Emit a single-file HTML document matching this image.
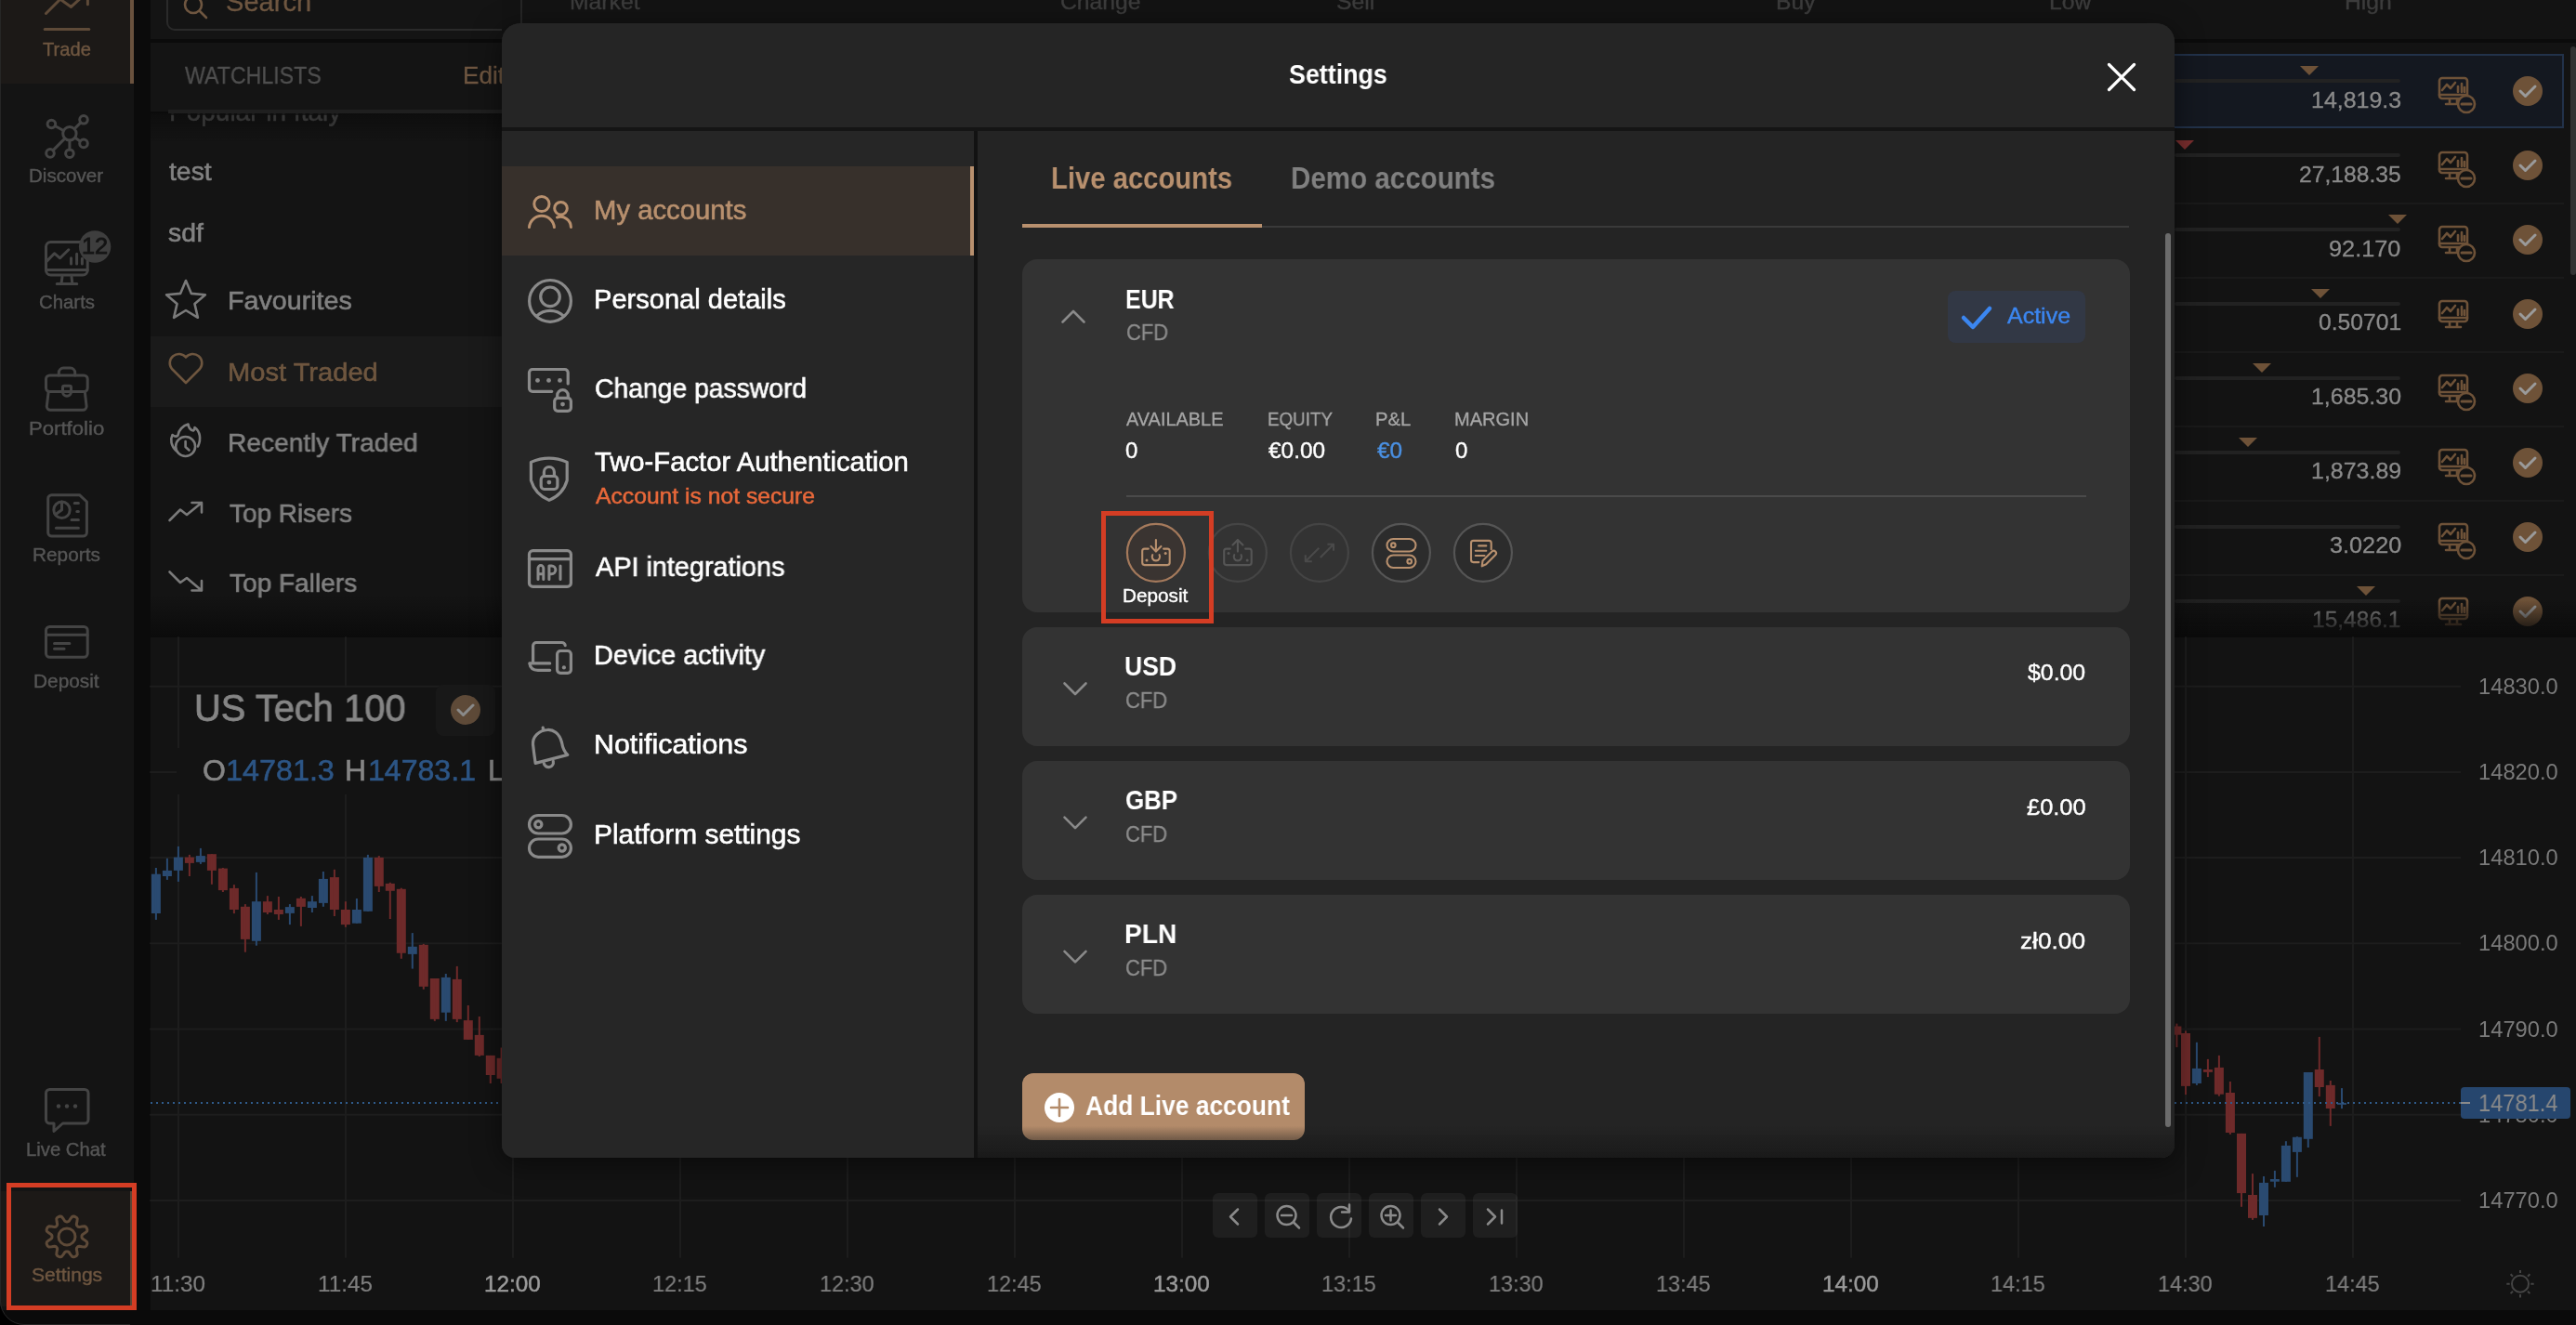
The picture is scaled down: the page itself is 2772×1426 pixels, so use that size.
<!DOCTYPE html><html><head><meta charset="utf-8"><style>
html,body{margin:0;padding:0;width:2772px;height:1426px;overflow:hidden;background:#0b0b0b}
.t{position:absolute;white-space:nowrap;line-height:1;font-family:"Liberation Sans",sans-serif;will-change:transform}
div{box-sizing:border-box}
</style></head><body>
<div style="position:absolute;left:0px;top:0px;width:2772px;height:1426px;background:#0b0b0b;border-radius:0px;"></div>
<div style="position:absolute;left:0px;top:0px;width:144px;height:1426px;background:#141414;border-radius:0px;"></div>
<div style="position:absolute;left:0px;top:0px;width:144px;height:90px;background:#1c1917;border-radius:0px;"></div>
<div style="position:absolute;left:140px;top:0px;width:4px;height:90px;background:#6a523e;border-radius:0px;"></div>
<div style="position:absolute;left:0px;top:1282px;width:144px;height:124px;background:#1c1917;border-radius:0px;"></div>
<div style="position:absolute;left:140px;top:1282px;width:4px;height:124px;background:#5a4636;border-radius:0px;"></div>
<div class="t" style="left:46.2px;top:44.1px;font-size:19.62px;letter-spacing:0px;color:#6e5640;font-weight:400;-webkit-text-stroke:0.4px #6e5640;transform:scaleX(1.0284);transform-origin:0 0;">Trade</div>
<div class="t" style="left:31.3px;top:180.4px;font-size:19.62px;letter-spacing:0px;color:#555555;font-weight:400;-webkit-text-stroke:0.4px #555555;transform:scaleX(1.0488);transform-origin:0 0;">Discover</div>
<div class="t" style="left:41.8px;top:316.4px;font-size:19.62px;letter-spacing:0px;color:#555555;font-weight:400;-webkit-text-stroke:0.4px #555555;transform:scaleX(1.0389);transform-origin:0 0;">Charts</div>
<div class="t" style="left:30.9px;top:452.4px;font-size:19.62px;letter-spacing:0px;color:#555555;font-weight:400;-webkit-text-stroke:0.4px #555555;transform:scaleX(1.1292);transform-origin:0 0;">Portfolio</div>
<div class="t" style="left:35.1px;top:588.4px;font-size:19.62px;letter-spacing:0px;color:#555555;font-weight:400;-webkit-text-stroke:0.4px #555555;transform:scaleX(1.0606);transform-origin:0 0;">Reports</div>
<div class="t" style="left:35.9px;top:724.4px;font-size:19.62px;letter-spacing:0px;color:#555555;font-weight:400;-webkit-text-stroke:0.4px #555555;transform:scaleX(1.0624);transform-origin:0 0;">Deposit</div>
<div class="t" style="left:28.4px;top:1228.4px;font-size:19.62px;letter-spacing:0px;color:#555555;font-weight:400;-webkit-text-stroke:0.4px #555555;transform:scaleX(1.0340);transform-origin:0 0;">Live Chat</div>
<div class="t" style="left:33.8px;top:1363.4px;font-size:19.62px;letter-spacing:0px;color:#6e5640;font-weight:400;-webkit-text-stroke:0.4px #6e5640;transform:scaleX(1.0748);transform-origin:0 0;">Settings</div>
<div style="position:absolute;left:0px;top:0px;width:1px;height:1426px;background:#262626;border-radius:0px;"></div>
<svg style="position:absolute;left:0;top:0;" width="2772" height="1426" viewBox="0 0 2772 1426" fill="none" stroke-linecap="round" stroke-linejoin="round"><g stroke="#5e4a38" stroke-width="3"><path d="M49.5 14.5 L64 0 M66 0 L76.5 7.4 L86.8 -2 M94.4 -2 V4.8"/><path d="M48.2 31.4 H95.8"/></g><g stroke="#444" stroke-width="3"><circle cx="74.9" cy="143.8" r="7.2"/><circle cx="55.4" cy="133.5" r="4.3"/><circle cx="90" cy="128.8" r="4.3"/><circle cx="90" cy="154.4" r="4.3"/><circle cx="54" cy="164.9" r="4.3"/><circle cx="74.9" cy="165.2" r="4.3"/><path d="M59.2 135.5 L68.3 140.5 M86.9 131.9 L80.2 138.6 M86.3 152 L80.8 148.3 M57 161.9 L69.7 149.1 M74.9 151 V160.9"/></g><g stroke="#444" stroke-width="3"><path d="M54.5 260.6 H94.2 V291 a5 5 0 0 1 -5 5 H54.5 a5 5 0 0 1 -5 -5 V265.6 a5 5 0 0 1 5 -5 Z"/><path d="M49.5 290.4 H94.2 M67 297.8 L66 305.2 M77 297.8 L77.8 305.2 M61.2 305.5 H82.8"/><path d="M50.6 280.9 L58.5 272.7 L64.6 277.8 L73.8 268.8 M76.5 277.8 V284.1 M82.6 273.3 V284.1 M88.4 278.3 V284.1"/></g><circle cx="102.1" cy="265.5" r="17.2" fill="#3e3e3e"/><g stroke="#444" stroke-width="3"><path d="M53.5 404 H90.2 a4 4 0 0 1 4 4 V417.5 a4 4 0 0 1 -4 4 H53.5 a4 4 0 0 1 -4 -4 V408 a4 4 0 0 1 4 -4 Z"/><path d="M52.2 421.5 L50.3 437.3 a4 4 0 0 0 4 4 H89.1 a4 4 0 0 0 4 -4 L91.3 421.5"/><path d="M63.3 404 V401 a5 5 0 0 1 5 -5 H75.7 a5 5 0 0 1 5 5 V404"/><path d="M67.5 416.7 a1.5 1.5 0 0 1 1.5 -1.5 H75 a1.5 1.5 0 0 1 1.5 1.5 V421.7 a4.5 4.5 0 0 1 -9 0 Z"/></g><g stroke="#444" stroke-width="3"><path d="M55.7 532.7 H85.5 L93.4 540 V573 a4 4 0 0 1 -4 4 H55.7 a4 4 0 0 1 -4 -4 V536.7 a4 4 0 0 1 4 -4 Z"/><circle cx="66.5" cy="548.8" r="8.7"/><path d="M66.5 540.1 V548.8 L59.6 553.8 M80.2 541.4 H84.4 M82.8 550.5 H84.4 M77 559.4 H84.4 M60.4 568.3 H84.4"/></g><g stroke="#444" stroke-width="3"><rect x="49.5" y="674.4" width="44.7" height="32.9" rx="4"/><path d="M49.5 683.3 H94.2 M58.5 692.5 H74.9 M58.5 698.3 H69.1"/></g><g stroke="#444" stroke-width="3"><path d="M53.5 1172.5 H91 a4 4 0 0 1 4 4 V1205 a4 4 0 0 1 -4 4 H67.5 L58 1217.5 V1209 H53.5 a4 4 0 0 1 -4 -4 V1176.5 a4 4 0 0 1 4 -4 Z"/></g><g fill="#444"><circle cx="63" cy="1190.5" r="2.2"/><circle cx="72" cy="1190.5" r="2.2"/><circle cx="81" cy="1190.5" r="2.2"/></g><g stroke="#5e4a38" stroke-width="3"><path d="M93.4 1339.8 L92.7 1341.1 L91.3 1342.1 L88.3 1341.8 L85.4 1341.2 L84.1 1341.5 L83.3 1342.2 L82.6 1343.0 L82.3 1344.3 L82.9 1347.2 L83.2 1350.2 L82.2 1351.6 L80.9 1352.3 L79.4 1352.8 L77.8 1352.5 L75.8 1350.1 L74.2 1347.6 L73.1 1347.0 L72.0 1346.9 L70.9 1347.0 L69.8 1347.6 L68.2 1350.1 L66.2 1352.5 L64.6 1352.8 L63.1 1352.3 L61.8 1351.6 L60.8 1350.2 L61.1 1347.2 L61.7 1344.3 L61.4 1343.0 L60.7 1342.2 L59.9 1341.5 L58.6 1341.2 L55.7 1341.8 L52.7 1342.1 L51.3 1341.1 L50.6 1339.8 L50.1 1338.3 L50.4 1336.7 L52.8 1334.7 L55.3 1333.1 L55.9 1332.0 L56.0 1330.9 L55.9 1329.8 L55.3 1328.7 L52.8 1327.1 L50.4 1325.1 L50.1 1323.5 L50.6 1322.0 L51.3 1320.7 L52.7 1319.7 L55.7 1320.0 L58.6 1320.6 L59.9 1320.3 L60.7 1319.6 L61.4 1318.8 L61.7 1317.5 L61.1 1314.6 L60.8 1311.6 L61.8 1310.2 L63.1 1309.5 L64.6 1309.0 L66.2 1309.3 L68.2 1311.7 L69.8 1314.2 L70.9 1314.8 L72.0 1314.9 L73.1 1314.8 L74.2 1314.2 L75.8 1311.7 L77.8 1309.3 L79.4 1309.0 L80.9 1309.5 L82.2 1310.2 L83.2 1311.6 L82.9 1314.6 L82.3 1317.5 L82.6 1318.8 L83.3 1319.6 L84.1 1320.3 L85.4 1320.6 L88.3 1320.0 L91.3 1319.7 L92.7 1320.7 L93.4 1322.0 L93.9 1323.5 L93.6 1325.1 L91.2 1327.1 L88.7 1328.7 L88.1 1329.8 L88.0 1330.9 L88.1 1332.0 L88.7 1333.1 L91.2 1334.7 L93.6 1336.7 L93.9 1338.3Z"/><circle cx="72" cy="1330.9" r="9"/></g></svg>
<div class="t" style="left:88.1px;top:254.4px;font-size:23.69px;letter-spacing:0px;color:#141414;font-weight:400;-webkit-text-stroke:0.8px #141414;transform:scaleX(1.0686);transform-origin:0 0;">12</div>
<div style="position:absolute;left:162px;top:0px;width:378px;height:42px;background:#141414;border-radius:0px;"></div>
<div style="position:absolute;left:162px;top:46px;width:378px;height:74px;background:#141414;border-radius:0px;"></div>
<div style="position:absolute;left:162px;top:122px;width:378px;height:564px;background:#141414;border-radius:0px;"></div>
<div style="position:absolute;left:162px;top:362px;width:378px;height:76px;background:#1a1a1a;border-radius:0px;"></div>
<div style="position:absolute;left:181px;top:118px;width:359px;height:4px;background:#1f1f1f;border-radius:0px;"></div>
<div style="position:absolute;left:162px;top:640px;width:378px;height:46px;background:linear-gradient(#14141400,#0b0b0b);border-radius:0px;"></div>
<div style="position:absolute;left:179px;top:-10px;width:400px;height:43px;border:2px solid #2a2a2a;border-radius:9px;box-sizing:border-box"></div>
<div class="t" style="left:242.7px;top:-11.6px;font-size:29.07px;letter-spacing:0px;color:#6e5640;font-weight:400;-webkit-text-stroke:0.3px #6e5640;">Search</div>
<div class="t" style="left:198.9px;top:68.4px;font-size:26.16px;letter-spacing:0px;color:#4f4f4f;font-weight:400;-webkit-text-stroke:0.3px #4f4f4f;transform:scaleX(0.8857);transform-origin:0 0;">WATCHLISTS</div>
<div class="t" style="left:497.9px;top:68.4px;font-size:26.16px;letter-spacing:0px;color:#6e5640;font-weight:400;-webkit-text-stroke:0.3px #6e5640;">Edit</div>
<div style="position:absolute;left:162px;top:122px;width:378px;height:12px;overflow:hidden"><div class="t" style="left:20px;top:-16px;font-size:28px;color:#3a3a3a;-webkit-text-stroke:0.3px #3a3a3a">Popular in Italy</div></div>
<div style="position:absolute;left:162px;top:122px;width:378px;height:30px;background:linear-gradient(rgba(11,11,11,.7),rgba(20,20,20,0));border-radius:0px;"></div>
<div style="position:absolute;left:162px;top:124px;width:378px;height:12px;overflow:hidden"><div class="t" style="left:20px;top:-17px;font-size:28px;color:#353535;-webkit-text-stroke:0.4px #353535">Popular in Italy</div></div>
<div class="t" style="left:181.6px;top:170.0px;font-size:28.34px;letter-spacing:0px;color:#828282;font-weight:400;-webkit-text-stroke:0.6px #828282;">test</div>
<div class="t" style="left:181.2px;top:236.0px;font-size:28.34px;letter-spacing:0px;color:#828282;font-weight:400;-webkit-text-stroke:0.6px #828282;">sdf</div>
<div class="t" style="left:245.2px;top:309.0px;font-size:28.34px;letter-spacing:0px;color:#808080;font-weight:400;-webkit-text-stroke:0.6px #808080;transform:scaleX(1.0114);transform-origin:0 0;">Favourites</div>
<div class="t" style="left:245.2px;top:385.5px;font-size:28.34px;letter-spacing:0px;color:#6e563f;font-weight:400;-webkit-text-stroke:0.6px #6e563f;transform:scaleX(1.0275);transform-origin:0 0;">Most Traded</div>
<div class="t" style="left:245.3px;top:461.5px;font-size:28.34px;letter-spacing:0px;color:#808080;font-weight:400;-webkit-text-stroke:0.6px #808080;transform:scaleX(0.9921);transform-origin:0 0;">Recently Traded</div>
<div class="t" style="left:246.9px;top:537.5px;font-size:28.34px;letter-spacing:0px;color:#808080;font-weight:400;-webkit-text-stroke:0.6px #808080;transform:scaleX(0.9859);transform-origin:0 0;">Top Risers</div>
<div class="t" style="left:246.9px;top:613.3px;font-size:28.34px;letter-spacing:0px;color:#808080;font-weight:400;-webkit-text-stroke:0.6px #808080;transform:scaleX(0.9895);transform-origin:0 0;">Top Fallers</div>
<svg style="position:absolute;left:0;top:0;" width="2772" height="1426" viewBox="0 0 2772 1426" fill="none" stroke-linecap="round" stroke-linejoin="round"><g stroke="#7a7a7a" stroke-width="2.6"><path d="M200.0 302.0 L205.9 315.9 L220.9 317.2 L209.5 327.1 L212.9 341.8 L200.0 334.0 L187.1 341.8 L190.5 327.1 L179.1 317.2 L194.1 315.9Z"/></g><path stroke="#6e563f" stroke-width="2.6" d="M200 412 L185 397 a8.6 8.6 0 0 1 15 -12.5 a8.6 8.6 0 0 1 15 12.5 Z"/><g stroke="#7a7a7a" stroke-width="2.6"><circle cx="199.6" cy="480.5" r="10.5"/><path d="M199.6 475 V481 L203.5 484.5"/><path d="M189.5 485 C184 480 183 473 185.5 468 C188 470 190 470 191.5 468.5 C192 463 197 458 202.5 456.5 C203 460 205 463 208 463.5 C209 463 209.5 462 209.5 460 C215 464 217 472 213 480.5"/><path d="M182.5 560 L194 548.5 L201 554 L217 541 M206.5 541 H217 V551.5"/><path d="M182.5 615.5 L194 627 L201 622 L217 635.5 M206.5 635.5 H217 V625"/></g><g stroke="#6e5640" stroke-width="2.6"><circle cx="208" cy="5" r="9"/><path d="M215 12 L222 19"/></g></svg>
<div style="position:absolute;left:540px;top:0px;width:2232px;height:42px;background:#131313;border-radius:0px;"></div>
<div style="position:absolute;left:560px;top:0px;width:2px;height:42px;background:#262626;border-radius:0px;"></div>
<div class="t" style="left:612.7px;top:-10.4px;font-size:24.71px;letter-spacing:0px;color:#3c3c3c;font-weight:400;-webkit-text-stroke:0.4px #3c3c3c;">Market</div>
<div class="t" style="left:1140.8px;top:-10.4px;font-size:24.71px;letter-spacing:0px;color:#3c3c3c;font-weight:400;-webkit-text-stroke:0.4px #3c3c3c;">Change</div>
<div class="t" style="left:1437.9px;top:-10.4px;font-size:24.71px;letter-spacing:0px;color:#3c3c3c;font-weight:400;-webkit-text-stroke:0.4px #3c3c3c;">Sell</div>
<div class="t" style="left:1911.0px;top:-10.4px;font-size:24.71px;letter-spacing:0px;color:#3c3c3c;font-weight:400;-webkit-text-stroke:0.4px #3c3c3c;">Buy</div>
<div class="t" style="left:2205.0px;top:-10.4px;font-size:24.71px;letter-spacing:0px;color:#3c3c3c;font-weight:400;-webkit-text-stroke:0.4px #3c3c3c;">Low</div>
<div class="t" style="left:2523.0px;top:-10.4px;font-size:24.71px;letter-spacing:0px;color:#3c3c3c;font-weight:400;-webkit-text-stroke:0.4px #3c3c3c;">High</div>
<div style="position:absolute;left:540px;top:46px;width:2232px;height:640px;background:#131313;border-radius:0px;"></div>
<div style="position:absolute;left:2300px;top:58px;width:459px;height:80px;background:#141820;border-radius:0px;box-shadow:inset 0 0 0 2px #22324a"></div>
<div style="position:absolute;left:2340px;top:218px;width:419px;height:2px;background:#1a1a1a;border-radius:0px;"></div>
<div style="position:absolute;left:2340px;top:298px;width:419px;height:2px;background:#1a1a1a;border-radius:0px;"></div>
<div style="position:absolute;left:2340px;top:378px;width:419px;height:2px;background:#1a1a1a;border-radius:0px;"></div>
<div style="position:absolute;left:2340px;top:458px;width:419px;height:2px;background:#1a1a1a;border-radius:0px;"></div>
<div style="position:absolute;left:2340px;top:538px;width:419px;height:2px;background:#1a1a1a;border-radius:0px;"></div>
<div style="position:absolute;left:2340px;top:618px;width:419px;height:2px;background:#1a1a1a;border-radius:0px;"></div>
<div style="position:absolute;left:2766px;top:50px;width:6px;height:246px;background:#333;border-radius:3px;"></div>
<svg style="position:absolute;left:0;top:0;" width="2772" height="1426" viewBox="0 0 2772 1426" fill="none" stroke-linecap="round" stroke-linejoin="round"><rect x="2340" y="85" width="243" height="4" rx="2" fill="#222"/><path d="M2475 71 H2495 L2485 81 Z" fill="#6e5238"/><g stroke="#6e5238" stroke-width="2.6"><rect x="2625" y="84" width="30" height="22" rx="3"/><path d="M2625 102 H2655 M2636 107 V111 M2644 107 V111 M2632 112 H2648"/><path d="M2628 97 L2633 91 L2637 95 L2642 89 M2645 93 V99 M2649 90 V99 M2652 94 V99"/></g><circle cx="2654" cy="112" r="9" fill="#141820" stroke="#6e5238" stroke-width="2.6"/><path d="M2649 112 H2659" stroke="#6e5238" stroke-width="3"/><circle cx="2720" cy="98" r="16" fill="#6e5238"/><path d="M2712 98 L2717.5 103.5 L2728 93" stroke="#9a9a9a" stroke-width="3"/><rect x="2340" y="165" width="243" height="4" rx="2" fill="#222"/><path d="M2341 151 H2361 L2351 161 Z" fill="#7a2e2e"/><g stroke="#6e5238" stroke-width="2.6"><rect x="2625" y="164" width="30" height="22" rx="3"/><path d="M2625 182 H2655 M2636 187 V191 M2644 187 V191 M2632 192 H2648"/><path d="M2628 177 L2633 171 L2637 175 L2642 169 M2645 173 V179 M2649 170 V179 M2652 174 V179"/></g><circle cx="2654" cy="192" r="9" fill="#131313" stroke="#6e5238" stroke-width="2.6"/><path d="M2649 192 H2659" stroke="#6e5238" stroke-width="3"/><circle cx="2720" cy="178" r="16" fill="#6e5238"/><path d="M2712 178 L2717.5 183.5 L2728 173" stroke="#9a9a9a" stroke-width="3"/><rect x="2340" y="245" width="243" height="4" rx="2" fill="#222"/><path d="M2570 231 H2590 L2580 241 Z" fill="#6e5238"/><g stroke="#6e5238" stroke-width="2.6"><rect x="2625" y="244" width="30" height="22" rx="3"/><path d="M2625 262 H2655 M2636 267 V271 M2644 267 V271 M2632 272 H2648"/><path d="M2628 257 L2633 251 L2637 255 L2642 249 M2645 253 V259 M2649 250 V259 M2652 254 V259"/></g><circle cx="2654" cy="272" r="9" fill="#131313" stroke="#6e5238" stroke-width="2.6"/><path d="M2649 272 H2659" stroke="#6e5238" stroke-width="3"/><circle cx="2720" cy="258" r="16" fill="#6e5238"/><path d="M2712 258 L2717.5 263.5 L2728 253" stroke="#9a9a9a" stroke-width="3"/><rect x="2340" y="325" width="243" height="4" rx="2" fill="#222"/><path d="M2487 311 H2507 L2497 321 Z" fill="#6e5238"/><g stroke="#6e5238" stroke-width="2.6"><rect x="2625" y="324" width="30" height="22" rx="3"/><path d="M2625 342 H2655 M2636 347 V351 M2644 347 V351 M2632 352 H2648"/><path d="M2628 337 L2633 331 L2637 335 L2642 329 M2645 333 V339 M2649 330 V339 M2652 334 V339"/></g><circle cx="2720" cy="338" r="16" fill="#6e5238"/><path d="M2712 338 L2717.5 343.5 L2728 333" stroke="#9a9a9a" stroke-width="3"/><rect x="2340" y="405" width="243" height="4" rx="2" fill="#222"/><path d="M2424 391 H2444 L2434 401 Z" fill="#6e5238"/><g stroke="#6e5238" stroke-width="2.6"><rect x="2625" y="404" width="30" height="22" rx="3"/><path d="M2625 422 H2655 M2636 427 V431 M2644 427 V431 M2632 432 H2648"/><path d="M2628 417 L2633 411 L2637 415 L2642 409 M2645 413 V419 M2649 410 V419 M2652 414 V419"/></g><circle cx="2654" cy="432" r="9" fill="#131313" stroke="#6e5238" stroke-width="2.6"/><path d="M2649 432 H2659" stroke="#6e5238" stroke-width="3"/><circle cx="2720" cy="418" r="16" fill="#6e5238"/><path d="M2712 418 L2717.5 423.5 L2728 413" stroke="#9a9a9a" stroke-width="3"/><rect x="2340" y="485" width="243" height="4" rx="2" fill="#222"/><path d="M2409 471 H2429 L2419 481 Z" fill="#6e5238"/><g stroke="#6e5238" stroke-width="2.6"><rect x="2625" y="484" width="30" height="22" rx="3"/><path d="M2625 502 H2655 M2636 507 V511 M2644 507 V511 M2632 512 H2648"/><path d="M2628 497 L2633 491 L2637 495 L2642 489 M2645 493 V499 M2649 490 V499 M2652 494 V499"/></g><circle cx="2654" cy="512" r="9" fill="#131313" stroke="#6e5238" stroke-width="2.6"/><path d="M2649 512 H2659" stroke="#6e5238" stroke-width="3"/><circle cx="2720" cy="498" r="16" fill="#6e5238"/><path d="M2712 498 L2717.5 503.5 L2728 493" stroke="#9a9a9a" stroke-width="3"/><rect x="2340" y="565" width="243" height="4" rx="2" fill="#222"/><g stroke="#6e5238" stroke-width="2.6"><rect x="2625" y="564" width="30" height="22" rx="3"/><path d="M2625 582 H2655 M2636 587 V591 M2644 587 V591 M2632 592 H2648"/><path d="M2628 577 L2633 571 L2637 575 L2642 569 M2645 573 V579 M2649 570 V579 M2652 574 V579"/></g><circle cx="2654" cy="592" r="9" fill="#131313" stroke="#6e5238" stroke-width="2.6"/><path d="M2649 592 H2659" stroke="#6e5238" stroke-width="3"/><circle cx="2720" cy="578" r="16" fill="#6e5238"/><path d="M2712 578 L2717.5 583.5 L2728 573" stroke="#9a9a9a" stroke-width="3"/><rect x="2340" y="645" width="243" height="4" rx="2" fill="#222"/><path d="M2536 631 H2556 L2546 641 Z" fill="#6e5238"/><g stroke="#6e5238" stroke-width="2.6"><rect x="2625" y="644" width="30" height="22" rx="3"/><path d="M2625 662 H2655 M2636 667 V671 M2644 667 V671 M2632 672 H2648"/><path d="M2628 657 L2633 651 L2637 655 L2642 649 M2645 653 V659 M2649 650 V659 M2652 654 V659"/></g><circle cx="2720" cy="658" r="16" fill="#6e5238"/><path d="M2712 658 L2717.5 663.5 L2728 653" stroke="#9a9a9a" stroke-width="3"/></svg>
<div class="t" style="left:2486.6px;top:96.9px;font-size:23.69px;letter-spacing:0px;color:#8a8a8a;font-weight:400;-webkit-text-stroke:0.3px #8a8a8a;transform:scaleX(1.0533);transform-origin:0 0;">14,819.3</div>
<div class="t" style="left:2473.9px;top:176.9px;font-size:23.69px;letter-spacing:0px;color:#8a8a8a;font-weight:400;-webkit-text-stroke:0.3px #8a8a8a;transform:scaleX(1.0423);transform-origin:0 0;">27,188.35</div>
<div class="t" style="left:2506.3px;top:256.9px;font-size:23.69px;letter-spacing:0px;color:#8a8a8a;font-weight:400;-webkit-text-stroke:0.3px #8a8a8a;transform:scaleX(1.0683);transform-origin:0 0;">92.170</div>
<div class="t" style="left:2494.6px;top:335.9px;font-size:23.69px;letter-spacing:0px;color:#8a8a8a;font-weight:400;-webkit-text-stroke:0.3px #8a8a8a;transform:scaleX(1.0434);transform-origin:0 0;">0.50701</div>
<div class="t" style="left:2486.6px;top:415.9px;font-size:23.69px;letter-spacing:0px;color:#8a8a8a;font-weight:400;-webkit-text-stroke:0.3px #8a8a8a;transform:scaleX(1.0519);transform-origin:0 0;">1,685.30</div>
<div class="t" style="left:2486.6px;top:495.9px;font-size:23.69px;letter-spacing:0px;color:#8a8a8a;font-weight:400;-webkit-text-stroke:0.3px #8a8a8a;transform:scaleX(1.0540);transform-origin:0 0;">1,873.89</div>
<div class="t" style="left:2506.5px;top:575.9px;font-size:23.69px;letter-spacing:0px;color:#8a8a8a;font-weight:400;-webkit-text-stroke:0.3px #8a8a8a;transform:scaleX(1.0657);transform-origin:0 0;">3.0220</div>
<div class="t" style="left:2488.4px;top:655.9px;font-size:23.69px;letter-spacing:0px;color:#8a8a8a;font-weight:400;-webkit-text-stroke:0.3px #8a8a8a;transform:scaleX(1.0356);transform-origin:0 0;">15,486.1</div>
<div style="position:absolute;left:540px;top:646px;width:2232px;height:40px;background:linear-gradient(#13131300,#0b0b0b);border-radius:0px;"></div>
<div style="position:absolute;left:162px;top:686px;width:2610px;height:724px;background:#131313;border-radius:0px;"></div>
<svg style="position:absolute;left:0;top:0;" width="2772" height="1426" viewBox="0 0 2772 1426" fill="none" stroke-linecap="round" stroke-linejoin="round"><g stroke="#1d1d1d" stroke-width="2"><path d="M192 686 V1353"/><path d="M372 686 V1353"/><path d="M552 686 V1353"/><path d="M732 686 V1353"/><path d="M912 686 V1353"/><path d="M1092 686 V1353"/><path d="M1272 686 V1353"/><path d="M1452 686 V1353"/><path d="M1632 686 V1353"/><path d="M1812 686 V1353"/><path d="M1992 686 V1353"/><path d="M2172 686 V1353"/><path d="M2352 686 V1353"/><path d="M2532 686 V1353"/><path d="M162 738.7 H2648"/><path d="M162 830.9 H2648"/><path d="M162 923.1 H2648"/><path d="M162 1015.3 H2648"/><path d="M162 1107.5 H2648"/><path d="M162 1199.7 H2648"/><path d="M162 1291.9 H2648"/></g></svg>
<div style="position:absolute;left:194px;top:740px;width:346px;height:65px;background:#131313;border-radius:0px;"></div>
<div style="position:absolute;left:190px;top:805px;width:350px;height:50px;background:#131313;border-radius:0px;"></div>
<div style="position:absolute;left:469px;top:737px;width:64px;height:55px;background:#181818;border-radius:8px;"></div>
<svg style="position:absolute;left:0;top:0" width="2772" height="1426"><circle cx="501" cy="764" r="16" fill="#5e4a38"/><path d="M493 764 L498.5 769.5 L509 759" stroke="#8a8a8a" stroke-width="3" fill="none" stroke-linecap="round" stroke-linejoin="round"/></svg>
<div class="t" style="left:208.6px;top:743.1px;font-size:39.97px;letter-spacing:0px;color:#858585;font-weight:400;-webkit-text-stroke:0.8px #858585;transform:scaleX(0.9972);transform-origin:0 0;">US Tech 100</div>
<div class="t" style="left:217.6px;top:812.9px;font-size:31.98px;letter-spacing:0px;color:#858585;font-weight:400;-webkit-text-stroke:0.6px #858585;">O</div>
<div class="t" style="left:242.6px;top:812.9px;font-size:31.98px;letter-spacing:0px;color:#2c5585;font-weight:400;-webkit-text-stroke:0.6px #2c5585;transform:scaleX(1.0111);transform-origin:0 0;">14781.3</div>
<div class="t" style="left:370.8px;top:812.9px;font-size:31.98px;letter-spacing:0px;color:#858585;font-weight:400;-webkit-text-stroke:0.6px #858585;">H</div>
<div class="t" style="left:396.4px;top:812.9px;font-size:31.98px;letter-spacing:0px;color:#2c5585;font-weight:400;-webkit-text-stroke:0.6px #2c5585;transform:scaleX(1.0036);transform-origin:0 0;">14783.1</div>
<div class="t" style="left:525.4px;top:812.9px;font-size:31.98px;letter-spacing:0px;color:#858585;font-weight:400;-webkit-text-stroke:0.6px #858585;">L</div>
<svg style="position:absolute;left:0;top:0;" width="2772" height="1426" viewBox="0 0 2772 1426" fill="none" stroke-linecap="round" stroke-linejoin="round"><rect x="162.9" y="940.7" width="10" height="42.3" fill="#2a4a70"/><rect x="166.9" y="934.0" width="2" height="55.9" fill="#2a4a70"/><rect x="174.9" y="936.9" width="10" height="6.1" fill="#2a4a70"/><rect x="178.9" y="923.8" width="2" height="23.1" fill="#2a4a70"/><rect x="186.9" y="922.6" width="10" height="14.3" fill="#2a4a70"/><rect x="190.9" y="910.9" width="2" height="38.0" fill="#2a4a70"/><rect x="198.9" y="922.6" width="10" height="6.3" fill="#6e2a2a"/><rect x="202.9" y="919.9" width="2" height="23.1" fill="#6e2a2a"/><rect x="210.9" y="921.1" width="10" height="6.8" fill="#2a4a70"/><rect x="214.9" y="912.9" width="2" height="17.0" fill="#2a4a70"/><rect x="222.9" y="919.2" width="10" height="17.7" fill="#6e2a2a"/><rect x="226.9" y="919.2" width="2" height="32.6" fill="#6e2a2a"/><rect x="234.9" y="934.6" width="10" height="23.5" fill="#6e2a2a"/><rect x="238.9" y="934.0" width="2" height="26.0" fill="#6e2a2a"/><rect x="246.9" y="955.9" width="10" height="23.1" fill="#6e2a2a"/><rect x="250.9" y="952.1" width="2" height="31.0" fill="#6e2a2a"/><rect x="258.9" y="975.8" width="10" height="35.1" fill="#6e2a2a"/><rect x="262.9" y="973.1" width="2" height="51.6" fill="#6e2a2a"/><rect x="270.9" y="970.2" width="10" height="42.6" fill="#2a4a70"/><rect x="274.9" y="938.9" width="2" height="78.8" fill="#2a4a70"/><rect x="282.9" y="970.2" width="10" height="11.8" fill="#6e2a2a"/><rect x="286.9" y="964.1" width="2" height="19.9" fill="#6e2a2a"/><rect x="294.9" y="979.0" width="10" height="5.0" fill="#6e2a2a"/><rect x="298.9" y="965.0" width="2" height="24.9" fill="#6e2a2a"/><rect x="306.9" y="976.1" width="10" height="6.8" fill="#2a4a70"/><rect x="310.9" y="973.1" width="2" height="22.0" fill="#2a4a70"/><rect x="318.9" y="966.8" width="10" height="9.1" fill="#6e2a2a"/><rect x="322.9" y="965.0" width="2" height="31.9" fill="#6e2a2a"/><rect x="330.9" y="970.2" width="10" height="6.8" fill="#2a4a70"/><rect x="334.9" y="964.1" width="2" height="17.9" fill="#2a4a70"/><rect x="342.9" y="945.9" width="10" height="26.0" fill="#2a4a70"/><rect x="346.9" y="938.0" width="2" height="37.8" fill="#2a4a70"/><rect x="354.9" y="944.1" width="10" height="34.9" fill="#6e2a2a"/><rect x="358.9" y="935.8" width="2" height="50.2" fill="#6e2a2a"/><rect x="366.9" y="979.0" width="10" height="16.1" fill="#6e2a2a"/><rect x="370.9" y="970.2" width="2" height="27.6" fill="#6e2a2a"/><rect x="378.9" y="979.0" width="10" height="14.7" fill="#2a4a70"/><rect x="382.9" y="967.0" width="2" height="26.7" fill="#2a4a70"/><rect x="390.9" y="922.9" width="10" height="57.9" fill="#2a4a70"/><rect x="394.9" y="919.9" width="2" height="60.9" fill="#2a4a70"/><rect x="402.8" y="922.9" width="10" height="31.0" fill="#6e2a2a"/><rect x="406.8" y="921.1" width="2" height="38.9" fill="#6e2a2a"/><rect x="414.8" y="950.9" width="10" height="7.9" fill="#6e2a2a"/><rect x="418.8" y="949.8" width="2" height="39.2" fill="#6e2a2a"/><rect x="426.8" y="956.8" width="10" height="69.0" fill="#6e2a2a"/><rect x="430.8" y="955.7" width="2" height="76.1" fill="#6e2a2a"/><rect x="438.8" y="1018.8" width="10" height="8.1" fill="#2a4a70"/><rect x="442.8" y="1004.1" width="2" height="38.5" fill="#2a4a70"/><rect x="450.8" y="1016.8" width="10" height="45.0" fill="#6e2a2a"/><rect x="454.8" y="1015.9" width="2" height="48.9" fill="#6e2a2a"/><rect x="462.8" y="1053.0" width="10" height="43.9" fill="#6e2a2a"/><rect x="466.8" y="1053.0" width="2" height="45.9" fill="#6e2a2a"/><rect x="474.8" y="1051.9" width="10" height="37.8" fill="#2a4a70"/><rect x="478.8" y="1048.0" width="2" height="50.9" fill="#2a4a70"/><rect x="486.8" y="1053.9" width="10" height="43.0" fill="#6e2a2a"/><rect x="490.8" y="1039.9" width="2" height="60.2" fill="#6e2a2a"/><rect x="498.8" y="1098.1" width="10" height="20.8" fill="#6e2a2a"/><rect x="502.8" y="1082.0" width="2" height="36.9" fill="#6e2a2a"/><rect x="510.8" y="1113.9" width="10" height="22.0" fill="#6e2a2a"/><rect x="514.8" y="1094.0" width="2" height="43.0" fill="#6e2a2a"/><rect x="522.8" y="1135.9" width="10" height="21.1" fill="#6e2a2a"/><rect x="526.8" y="1135.9" width="2" height="30.1" fill="#6e2a2a"/><rect x="534.6" y="1138.8" width="10" height="22.0" fill="#6e2a2a"/><rect x="538.6" y="1127.5" width="2" height="38.5" fill="#6e2a2a"/><rect x="2337.4" y="1104.5" width="10" height="9.2" fill="#6e2a2a"/><rect x="2341.4" y="1101.6" width="2" height="25.5" fill="#6e2a2a"/><rect x="2347.0" y="1112.0" width="10" height="56.9" fill="#6e2a2a"/><rect x="2351.0" y="1109.4" width="2" height="68.7" fill="#6e2a2a"/><rect x="2358.9" y="1149.9" width="10" height="16.1" fill="#2a4a70"/><rect x="2362.9" y="1121.8" width="2" height="46.1" fill="#2a4a70"/><rect x="2370.9" y="1151.0" width="10" height="2.9" fill="#6e2a2a"/><rect x="2374.9" y="1139.9" width="2" height="19.2" fill="#6e2a2a"/><rect x="2382.9" y="1148.9" width="10" height="28.8" fill="#6e2a2a"/><rect x="2386.9" y="1135.9" width="2" height="43.8" fill="#6e2a2a"/><rect x="2394.9" y="1176.0" width="10" height="43.0" fill="#6e2a2a"/><rect x="2398.9" y="1164.0" width="2" height="56.9" fill="#6e2a2a"/><rect x="2407.0" y="1219.9" width="10" height="64.2" fill="#6e2a2a"/><rect x="2411.0" y="1219.9" width="2" height="78.9" fill="#6e2a2a"/><rect x="2419.0" y="1286.0" width="10" height="24.9" fill="#6e2a2a"/><rect x="2423.0" y="1263.1" width="2" height="49.8" fill="#6e2a2a"/><rect x="2431.0" y="1272.9" width="10" height="35.1" fill="#2a4a70"/><rect x="2435.0" y="1266.0" width="2" height="54.0" fill="#2a4a70"/><rect x="2442.9" y="1269.0" width="10" height="2.7" fill="#2a4a70"/><rect x="2446.9" y="1259.9" width="2" height="17.9" fill="#2a4a70"/><rect x="2454.9" y="1232.9" width="10" height="38.9" fill="#2a4a70"/><rect x="2458.9" y="1228.2" width="2" height="43.6" fill="#2a4a70"/><rect x="2466.9" y="1223.8" width="10" height="16.1" fill="#2a4a70"/><rect x="2470.9" y="1223.2" width="2" height="43.6" fill="#2a4a70"/><rect x="2478.8" y="1154.0" width="10" height="71.8" fill="#2a4a70"/><rect x="2482.8" y="1154.0" width="2" height="81.0" fill="#2a4a70"/><rect x="2490.8" y="1151.0" width="10" height="19.0" fill="#6e2a2a"/><rect x="2494.8" y="1115.9" width="2" height="64.2" fill="#6e2a2a"/><rect x="2502.8" y="1167.9" width="10" height="25.1" fill="#6e2a2a"/><rect x="2506.8" y="1163.0" width="2" height="48.9" fill="#6e2a2a"/><rect x="2515.0" y="1186.9" width="10" height="2.0" fill="#2a4a70"/><rect x="2519.0" y="1171.1" width="2" height="22.0" fill="#2a4a70"/><path d="M162 1187 H2648" stroke="#2f5a8a" stroke-width="2" stroke-dasharray="2 4" stroke-linecap="butt"/></svg>
<div style="position:absolute;left:2648px;top:686px;width:124px;height:724px;background:#131313;border-radius:0px;"></div>
<div class="t" style="left:2667.2px;top:727.7px;font-size:23.55px;letter-spacing:0px;color:#7a7a7a;font-weight:400;transform:scaleX(1.0071);transform-origin:0 0;">14830.0</div>
<div class="t" style="left:2667.2px;top:819.9px;font-size:23.55px;letter-spacing:0px;color:#7a7a7a;font-weight:400;transform:scaleX(1.0071);transform-origin:0 0;">14820.0</div>
<div class="t" style="left:2667.2px;top:912.1px;font-size:23.55px;letter-spacing:0px;color:#7a7a7a;font-weight:400;transform:scaleX(1.0071);transform-origin:0 0;">14810.0</div>
<div class="t" style="left:2667.2px;top:1004.3px;font-size:23.55px;letter-spacing:0px;color:#7a7a7a;font-weight:400;transform:scaleX(1.0071);transform-origin:0 0;">14800.0</div>
<div class="t" style="left:2667.2px;top:1096.5px;font-size:23.55px;letter-spacing:0px;color:#7a7a7a;font-weight:400;transform:scaleX(1.0071);transform-origin:0 0;">14790.0</div>
<div class="t" style="left:2667.2px;top:1188.7px;font-size:23.55px;letter-spacing:0px;color:#7a7a7a;font-weight:400;transform:scaleX(1.0071);transform-origin:0 0;">14780.0</div>
<div class="t" style="left:2667.2px;top:1280.9px;font-size:23.55px;letter-spacing:0px;color:#7a7a7a;font-weight:400;transform:scaleX(1.0071);transform-origin:0 0;">14770.0</div>
<div style="position:absolute;left:2648px;top:1170px;width:118px;height:34px;background:#26466e;border-radius:4px;"></div>
<div style="position:absolute;left:2648px;top:1186px;width:10px;height:2px;background:#8a8a8a;border-radius:0px;"></div>
<div class="t" style="left:2667.2px;top:1174.7px;font-size:25.73px;letter-spacing:0px;color:#8a8a8a;font-weight:400;transform:scaleX(0.9191);transform-origin:0 0;">14781.4</div>
<svg style="position:absolute;left:0;top:0" width="2772" height="1426"><g stroke="#444" stroke-width="2" fill="none"><circle cx="2712" cy="1381.7" r="9"/><path d="M2712 1367 V1370 M2712 1393 V1396.4 M2697.3 1381.7 H2700.7 M2723.3 1381.7 H2726.7 M2701.6 1371.3 L2704 1373.7 M2720 1389.7 L2722.4 1392.1 M2701.6 1392.1 L2704 1389.7 M2720 1373.7 L2722.4 1371.3"/></g></svg>
<div class="t" style="left:162.2px;top:1370.0px;font-size:24.27px;letter-spacing:0px;color:#7e7e7e;font-weight:400;-webkit-text-stroke:0.2px #7e7e7e;transform:scaleX(0.9966);transform-origin:0 0;">11:30</div>
<div class="t" style="left:342.2px;top:1370.0px;font-size:24.27px;letter-spacing:0px;color:#7e7e7e;font-weight:400;-webkit-text-stroke:0.2px #7e7e7e;transform:scaleX(0.9977);transform-origin:0 0;">11:45</div>
<div class="t" style="left:521.2px;top:1370.0px;font-size:24.27px;letter-spacing:0px;color:#9a9a9a;font-weight:400;-webkit-text-stroke:0.5px #9a9a9a;">12:00</div>
<div class="t" style="left:702.2px;top:1370.0px;font-size:24.27px;letter-spacing:0px;color:#7e7e7e;font-weight:400;-webkit-text-stroke:0.2px #7e7e7e;transform:scaleX(0.9663);transform-origin:0 0;">12:15</div>
<div class="t" style="left:882.2px;top:1370.0px;font-size:24.27px;letter-spacing:0px;color:#7e7e7e;font-weight:400;-webkit-text-stroke:0.2px #7e7e7e;transform:scaleX(0.9653);transform-origin:0 0;">12:30</div>
<div class="t" style="left:1062.2px;top:1370.0px;font-size:24.27px;letter-spacing:0px;color:#7e7e7e;font-weight:400;-webkit-text-stroke:0.2px #7e7e7e;transform:scaleX(0.9663);transform-origin:0 0;">12:45</div>
<div class="t" style="left:1241.2px;top:1370.0px;font-size:24.27px;letter-spacing:0px;color:#9a9a9a;font-weight:400;-webkit-text-stroke:0.5px #9a9a9a;">13:00</div>
<div class="t" style="left:1422.2px;top:1370.0px;font-size:24.27px;letter-spacing:0px;color:#7e7e7e;font-weight:400;-webkit-text-stroke:0.2px #7e7e7e;transform:scaleX(0.9663);transform-origin:0 0;">13:15</div>
<div class="t" style="left:1602.2px;top:1370.0px;font-size:24.27px;letter-spacing:0px;color:#7e7e7e;font-weight:400;-webkit-text-stroke:0.2px #7e7e7e;transform:scaleX(0.9653);transform-origin:0 0;">13:30</div>
<div class="t" style="left:1782.2px;top:1370.0px;font-size:24.27px;letter-spacing:0px;color:#7e7e7e;font-weight:400;-webkit-text-stroke:0.2px #7e7e7e;transform:scaleX(0.9663);transform-origin:0 0;">13:45</div>
<div class="t" style="left:1961.2px;top:1370.0px;font-size:24.27px;letter-spacing:0px;color:#9a9a9a;font-weight:400;-webkit-text-stroke:0.5px #9a9a9a;">14:00</div>
<div class="t" style="left:2142.2px;top:1370.0px;font-size:24.27px;letter-spacing:0px;color:#7e7e7e;font-weight:400;-webkit-text-stroke:0.2px #7e7e7e;transform:scaleX(0.9663);transform-origin:0 0;">14:15</div>
<div class="t" style="left:2322.2px;top:1370.0px;font-size:24.27px;letter-spacing:0px;color:#7e7e7e;font-weight:400;-webkit-text-stroke:0.2px #7e7e7e;transform:scaleX(0.9653);transform-origin:0 0;">14:30</div>
<div class="t" style="left:2502.2px;top:1370.0px;font-size:24.27px;letter-spacing:0px;color:#7e7e7e;font-weight:400;-webkit-text-stroke:0.2px #7e7e7e;transform:scaleX(0.9663);transform-origin:0 0;">14:45</div>
<svg style="position:absolute;left:0;top:0;" width="2772" height="1426" viewBox="0 0 2772 1426" fill="none" stroke-linecap="round" stroke-linejoin="round"><rect x="1305" y="1284" width="48" height="48" rx="6" fill="rgba(255,255,255,0.05)"/><rect x="1361" y="1284" width="48" height="48" rx="6" fill="rgba(255,255,255,0.05)"/><rect x="1417" y="1284" width="48" height="48" rx="6" fill="rgba(255,255,255,0.05)"/><rect x="1473" y="1284" width="48" height="48" rx="6" fill="rgba(255,255,255,0.05)"/><rect x="1529" y="1284" width="48" height="48" rx="6" fill="rgba(255,255,255,0.05)"/><rect x="1585" y="1284" width="48" height="48" rx="6" fill="rgba(255,255,255,0.05)"/><g stroke="#8a8a8a" stroke-width="2.5" fill="none" transform="translate(0 1.5)"><path d="M1332 1300 L1324 1308 L1332 1316"/><circle cx="1384.5" cy="1306.5" r="10"/><path d="M1392 1314 L1398 1320 M1379 1306.5 H1390"/><path d="M1452 1302 A11 11 0 1 0 1454 1310"/><path d="M1444 1303 H1452 V1295"/><circle cx="1496.5" cy="1306.5" r="10"/><path d="M1504 1314 L1510 1320 M1491 1306.5 H1502 M1496.5 1301 V1312"/><path d="M1549 1300 L1557 1308 L1549 1316"/><path d="M1601 1300 L1609 1308 L1601 1316 M1616 1301 V1315"/></g></svg>
<div style="position:absolute;left:0px;top:1410px;width:2772px;height:16px;background:#0a0a0a;border-radius:0px;"></div>
<svg style="position:absolute;left:0;top:0" width="2772" height="1426"><path d="M0 1400 V1426 H26 A26 26 0 0 1 0 1400 Z" fill="#000"/><path d="M0.5 1400 A25.5 25.5 0 0 0 26 1425.5 H140" stroke="#262626" stroke-width="1" fill="none"/></svg>
<div style="position:absolute;left:540px;top:25px;width:1800px;height:1221px;border-radius:20px 20px 14px 14px;background:#252525;overflow:hidden;box-shadow:0 6px 30px rgba(0,0,0,.5)">
<div style="position:absolute;left:0px;top:0px;width:1800px;height:112px;background:#252525;border-radius:0px;"></div>
<div style="position:absolute;left:0px;top:112px;width:1800px;height:4px;background:#151515;border-radius:0px;"></div>
<div style="position:absolute;left:0px;top:116px;width:508px;height:1105px;background:#262626;border-radius:0px;"></div>
<div style="position:absolute;left:508px;top:116px;width:4px;height:1105px;background:#121212;border-radius:0px;"></div>
<div style="position:absolute;left:512px;top:116px;width:1288px;height:1105px;background:#242424;border-radius:0px;"></div>
<div style="position:absolute;left:0px;top:154px;width:508px;height:96px;background:#37302b;border-radius:0px;"></div>
<div style="position:absolute;left:504px;top:154px;width:4px;height:96px;background:#b8906e;border-radius:0px;"></div>
</div>
<div class="t" style="left:1387.3px;top:65.9px;font-size:29.07px;letter-spacing:0px;color:#fff;font-weight:700;transform:scaleX(0.9221);transform-origin:0 0;">Settings</div>
<svg style="position:absolute;left:0;top:0" width="2772" height="1426"><path d="M2269.5 69.5 L2296.5 96.5 M2296.5 69.5 L2269.5 96.5" stroke="#fff" stroke-width="3.2" stroke-linecap="round"/></svg>
<div class="t" style="left:638.7px;top:212.0px;font-size:29.07px;letter-spacing:0px;color:#b8906e;font-weight:400;-webkit-text-stroke:0.6px #b8906e;transform:scaleX(1.0074);transform-origin:0 0;">My accounts</div>
<div class="t" style="left:638.7px;top:308.1px;font-size:29.07px;letter-spacing:0px;color:#fff;font-weight:400;-webkit-text-stroke:0.6px #fff;transform:scaleX(0.9976);transform-origin:0 0;">Personal details</div>
<div class="t" style="left:639.6px;top:403.9px;font-size:29.07px;letter-spacing:0px;color:#fff;font-weight:400;-webkit-text-stroke:0.6px #fff;transform:scaleX(0.9739);transform-origin:0 0;">Change password</div>
<div class="t" style="left:640.4px;top:483.4px;font-size:29.07px;letter-spacing:0px;color:#fff;font-weight:400;-webkit-text-stroke:0.6px #fff;transform:scaleX(1.0055);transform-origin:0 0;">Two-Factor Authentication</div>
<div class="t" style="left:641.0px;top:595.8px;font-size:29.07px;letter-spacing:0px;color:#fff;font-weight:400;-webkit-text-stroke:0.6px #fff;transform:scaleX(0.9916);transform-origin:0 0;">API integrations</div>
<div class="t" style="left:638.7px;top:691.4px;font-size:29.07px;letter-spacing:0px;color:#fff;font-weight:400;-webkit-text-stroke:0.6px #fff;transform:scaleX(0.9922);transform-origin:0 0;">Device activity</div>
<div class="t" style="left:638.6px;top:787.4px;font-size:29.07px;letter-spacing:0px;color:#fff;font-weight:400;-webkit-text-stroke:0.6px #fff;transform:scaleX(1.0451);transform-origin:0 0;">Notifications</div>
<div class="t" style="left:638.6px;top:884.4px;font-size:29.07px;letter-spacing:0px;color:#fff;font-weight:400;-webkit-text-stroke:0.6px #fff;transform:scaleX(1.0274);transform-origin:0 0;">Platform settings</div>
<div class="t" style="left:641.0px;top:523.2px;font-size:23.69px;letter-spacing:0px;color:#e8683a;font-weight:400;-webkit-text-stroke:0.5px #e8683a;transform:scaleX(1.0422);transform-origin:0 0;">Account is not secure</div>
<svg style="position:absolute;left:0;top:0;" width="2772" height="1426" viewBox="0 0 2772 1426" fill="none" stroke-linecap="round" stroke-linejoin="round"><g stroke="#b8906e" stroke-width="3"><circle cx="582.9" cy="219.5" r="8.1"/><path d="M569.5 244.6 A13.5 13.5 0 0 1 596.4 244.6"/><circle cx="603.5" cy="224.2" r="6.8"/><path d="M599.5 234 A11.3 11.3 0 0 1 614.4 244.6"/></g><g stroke="#8a8a8a" stroke-width="3.2"><circle cx="592" cy="323.9" r="22.4"/><circle cx="592" cy="319.3" r="10.3"/><path d="M577.5 340.2 A21 21 0 0 1 606.5 340.2"/><path d="M593.8 421.3 H573 a3.5 3.5 0 0 1 -3.5 -3.5 V401 a3.5 3.5 0 0 1 3.5 -3.5 H607.7 a3.5 3.5 0 0 1 3.5 3.5 V413"/><rect x="596.7" y="428.3" width="17.7" height="14" rx="3.5"/><path d="M599.7 428.3 V425.5 a5.8 5.8 0 0 1 11.6 0 V428.3"/><path d="M571.4 497.4 Q590.9 489 610.2 497.4 V517 Q606 532 590.9 538.4 Q575.8 532 571.4 517 Z"/><rect x="582.2" y="512.5" width="17.7" height="14" rx="3.5"/><path d="M585.4 512.5 V508 a5.5 5.5 0 0 1 11 0 V512.5"/><rect x="569.5" y="592.6" width="44.9" height="38.8" rx="4"/><path d="M569.5 601.6 H614.4"/><path d="M579 623.5 V611.5 a2.9 2.9 0 0 1 5.8 0 V623.5 M579 617.7 H584.8 M590.9 623.5 V609 H593.5 a4.35 4.35 0 0 1 0 8.7 H590.9 M603 609 V623.5" stroke-width="3"/><path d="M573.6 712.6 V695 a3.5 3.5 0 0 1 3.5 -3.5 H604.5 a3.5 3.5 0 0 1 3.7 3.2"/><path d="M591.7 713.9 H569.8 q1 7.4 9 7.4 H591.7"/><rect x="599.6" y="700.5" width="14.8" height="23.8" rx="3.5"/><path d="M576.2 821.4 L610.8 812.4 Q606 808 604.5 799 C602 789 595 785 589 785.5 C580 786 573 793 573.5 801 Q574.5 810 576.2 821.4 Z"/><path d="M584.2 783 L584.6 785.5"/><path d="M585.3 821.6 A5 5 0 0 0 595.3 819.4"/><rect x="569.5" y="877.5" width="44.9" height="19.5" rx="9.75"/><circle cx="579.3" cy="887.2" r="3.6"/><rect x="569.5" y="903" width="44.9" height="19.3" rx="9.65"/><circle cx="604.8" cy="912.5" r="3.6"/></g><g fill="#8a8a8a"><circle cx="578.5" cy="409.4" r="2.4"/><circle cx="590.5" cy="409.4" r="2.4"/><circle cx="602.5" cy="409.4" r="2.4"/><circle cx="605.5" cy="435.1" r="2.4"/><circle cx="590.9" cy="519.1" r="2.4"/><circle cx="606.9" cy="718.4" r="2.1"/></g></svg>
<div class="t" style="left:1131.1px;top:175.3px;font-size:33.87px;letter-spacing:0px;color:#b8906e;font-weight:700;transform:scaleX(0.8636);transform-origin:0 0;">Live accounts</div>
<div class="t" style="left:1388.7px;top:175.3px;font-size:33.87px;letter-spacing:0px;color:#808080;font-weight:700;transform:scaleX(0.8727);transform-origin:0 0;">Demo accounts</div>
<div style="position:absolute;left:1100px;top:243px;width:1191px;height:2px;background:#3a3a3a;border-radius:0px;"></div>
<div style="position:absolute;left:1100px;top:241px;width:258px;height:4px;background:#b8906e;border-radius:0px;"></div>
<div style="position:absolute;left:2330px;top:251px;width:6px;height:962px;background:#6b6b6b;border-radius:3px;"></div>
<div style="position:absolute;left:1100px;top:279px;width:1192px;height:380px;background:#333333;border-radius:16px;"></div>
<div style="position:absolute;left:1100px;top:675px;width:1192px;height:128px;background:#333333;border-radius:16px;"></div>
<div style="position:absolute;left:1100px;top:819px;width:1192px;height:128px;background:#333333;border-radius:16px;"></div>
<div style="position:absolute;left:1100px;top:963px;width:1192px;height:128px;background:#333333;border-radius:16px;"></div>
<div class="t" style="left:1211.4px;top:307.6px;font-size:29.07px;letter-spacing:0px;color:#fff;font-weight:700;transform:scaleX(0.8585);transform-origin:0 0;">EUR</div>
<div class="t" style="left:1211.9px;top:346.9px;font-size:23.69px;letter-spacing:0px;color:#8c8c8c;font-weight:400;-webkit-text-stroke:0.3px #8c8c8c;transform:scaleX(0.9272);transform-origin:0 0;">CFD</div>
<div class="t" style="left:1210.4px;top:702.9px;font-size:29.07px;letter-spacing:0px;color:#fff;font-weight:700;transform:scaleX(0.9145);transform-origin:0 0;">USD</div>
<div class="t" style="left:1210.9px;top:742.9px;font-size:23.69px;letter-spacing:0px;color:#8c8c8c;font-weight:400;-webkit-text-stroke:0.3px #8c8c8c;transform:scaleX(0.9272);transform-origin:0 0;">CFD</div>
<div class="t" style="left:2182.3px;top:712.4px;font-size:24.42px;letter-spacing:0px;color:#fff;font-weight:400;-webkit-text-stroke:0.4px #fff;transform:scaleX(1.0176);transform-origin:0 0;">$0.00</div>
<div class="t" style="left:1211.0px;top:847.1px;font-size:29.07px;letter-spacing:0px;color:#fff;font-weight:700;transform:scaleX(0.8916);transform-origin:0 0;">GBP</div>
<div class="t" style="left:1210.9px;top:887.1px;font-size:23.69px;letter-spacing:0px;color:#8c8c8c;font-weight:400;-webkit-text-stroke:0.3px #8c8c8c;transform:scaleX(0.9272);transform-origin:0 0;">CFD</div>
<div class="t" style="left:2180.8px;top:856.6px;font-size:24.42px;letter-spacing:0px;color:#fff;font-weight:400;-webkit-text-stroke:0.4px #fff;transform:scaleX(1.0417);transform-origin:0 0;">£0.00</div>
<div class="t" style="left:1210.2px;top:991.3px;font-size:29.07px;letter-spacing:0px;color:#fff;font-weight:700;transform:scaleX(0.9671);transform-origin:0 0;">PLN</div>
<div class="t" style="left:1210.9px;top:1031.3px;font-size:23.69px;letter-spacing:0px;color:#8c8c8c;font-weight:400;-webkit-text-stroke:0.3px #8c8c8c;transform:scaleX(0.9272);transform-origin:0 0;">CFD</div>
<div class="t" style="left:2174.4px;top:1000.8px;font-size:24.42px;letter-spacing:0px;color:#fff;font-weight:400;-webkit-text-stroke:0.4px #fff;transform:scaleX(1.0752);transform-origin:0 0;">zł0.00</div>
<div style="position:absolute;left:2096px;top:313px;width:148px;height:56px;background:#323845;border-radius:8px;"></div>
<div class="t" style="left:2160.0px;top:328.9px;font-size:23.69px;letter-spacing:0px;color:#3b86f0;font-weight:400;-webkit-text-stroke:0.4px #3b86f0;transform:scaleX(1.0552);transform-origin:0 0;">Active</div>
<div class="t" style="left:1212.3px;top:441.6px;font-size:19.62px;letter-spacing:0px;color:#a6a6a6;font-weight:400;-webkit-text-stroke:0.3px #a6a6a6;transform:scaleX(1.0158);transform-origin:0 0;">AVAILABLE</div>
<div class="t" style="left:1363.5px;top:441.6px;font-size:19.62px;letter-spacing:0px;color:#a6a6a6;font-weight:400;-webkit-text-stroke:0.3px #a6a6a6;transform:scaleX(0.9573);transform-origin:0 0;">EQUITY</div>
<div class="t" style="left:1480.4px;top:441.6px;font-size:19.62px;letter-spacing:0px;color:#a6a6a6;font-weight:400;-webkit-text-stroke:0.3px #a6a6a6;transform:scaleX(1.0307);transform-origin:0 0;">P&amp;L</div>
<div class="t" style="left:1565.4px;top:441.6px;font-size:19.62px;letter-spacing:0px;color:#a6a6a6;font-weight:400;-webkit-text-stroke:0.3px #a6a6a6;transform:scaleX(1.0219);transform-origin:0 0;">MARGIN</div>
<div class="t" style="left:1211.1px;top:472.9px;font-size:23.98px;letter-spacing:0px;color:#fff;font-weight:400;-webkit-text-stroke:0.4px #fff;">0</div>
<div class="t" style="left:1364.8px;top:472.9px;font-size:23.98px;letter-spacing:0px;color:#fff;font-weight:400;-webkit-text-stroke:0.4px #fff;transform:scaleX(1.0180);transform-origin:0 0;">€0.00</div>
<div class="t" style="left:1481.8px;top:472.9px;font-size:23.98px;letter-spacing:0px;color:#4a90e2;font-weight:400;-webkit-text-stroke:0.4px #4a90e2;transform:scaleX(1.0180);transform-origin:0 0;">€0</div>
<div class="t" style="left:1566.1px;top:472.9px;font-size:23.98px;letter-spacing:0px;color:#fff;font-weight:400;-webkit-text-stroke:0.4px #fff;">0</div>
<div style="position:absolute;left:1212px;top:533px;width:1033px;height:2px;background:#4a4a4a;border-radius:0px;"></div>
<svg style="position:absolute;left:0;top:0;" width="2772" height="1426" viewBox="0 0 2772 1426" fill="none" stroke-linecap="round" stroke-linejoin="round"><g stroke="#8a8a8a" stroke-width="2.6"><path d="M1143.5 346.5 L1155 335 L1166.5 346.5"/><path d="M1145.5 735.5 L1157 747.0 L1168.5 735.5"/><path d="M1145.5 879.7 L1157 891.2 L1168.5 879.7"/><path d="M1145.5 1023.9 L1157 1035.4 L1168.5 1023.9"/></g><path d="M2113 342 L2123 352 L2141 332" stroke="#3b86f0" stroke-width="4.5"/><circle cx="1243.9" cy="594.85" r="31" fill="#3a3431" stroke="#a57a5c" stroke-width="2.2"/><circle cx="1331.9" cy="594.85" r="31" fill="none" stroke="#454545" stroke-width="2.2"/><circle cx="1419.9" cy="594.85" r="31" fill="none" stroke="#444" stroke-width="2.2"/><circle cx="1507.9" cy="594.85" r="31" fill="#2c2c2c" stroke="#555" stroke-width="2.2"/><circle cx="1595.9" cy="594.85" r="31" fill="#2c2c2c" stroke="#555" stroke-width="2.2"/><g stroke="#b8906e" stroke-width="2.1" transform="translate(0.0 0)"><path d="M1235.8 590.6 H1231.7 a2.5 2.5 0 0 0 -2.5 2.5 V605.6 a2.5 2.5 0 0 0 2.5 2.5 H1256.2 a2.5 2.5 0 0 0 2.5 -2.5 V593.1 a2.5 2.5 0 0 0 -2.5 -2.5 H1252.1"/><path d="M1243.9 581 V593.6 M1238.5 587.9 L1243.9 593.6 L1249.4 587.9"/><path d="M1240.2 597.2 A4.2 4.2 0 1 0 1247.6 597.2"/></g><g fill="#b8906e"><circle cx="1234.0" cy="603" r="1.5"/><circle cx="1254.2" cy="595.6" r="1.5"/></g><g stroke="#555" stroke-width="2.1" transform="translate(88.0 0)"><path d="M1235.8 590.6 H1231.7 a2.5 2.5 0 0 0 -2.5 2.5 V605.6 a2.5 2.5 0 0 0 2.5 2.5 H1256.2 a2.5 2.5 0 0 0 2.5 -2.5 V593.1 a2.5 2.5 0 0 0 -2.5 -2.5 H1252.1"/><path d="M1243.9 593.6 V581 M1238.5 586.5 L1243.9 581 L1249.4 586.5"/><path d="M1240.2 597.2 A4.2 4.2 0 1 0 1247.6 597.2"/></g><g fill="#555"><circle cx="1322.0" cy="595.6" r="1.5"/><circle cx="1342.2" cy="603" r="1.5"/></g><g stroke="#4a4a4a" stroke-width="2.1" stroke-linecap="butt"><path d="M1419.3 589.7 L1405.8 603.2 M1404.8 597.3 V604.2 H1411.8 M1420.8 600 L1434 586.8 M1428.4 585.8 H1435 V592.7"/></g><g stroke="#b8906e" stroke-width="2.1"><rect x="1492.5" y="580" width="31" height="13.5" rx="6.75"/><circle cx="1499.3" cy="586.7" r="2.3"/><rect x="1492.5" y="597.5" width="31" height="13.5" rx="6.75"/><circle cx="1516.7" cy="604.2" r="2.3"/></g><g stroke="#b8906e" stroke-width="2.1"><path d="M1591.4 605.1 H1585.5 a2.5 2.5 0 0 1 -2.5 -2.5 V584.4 a2.5 2.5 0 0 1 2.5 -2.5 H1602.2 a2.5 2.5 0 0 1 2.5 2.5 V591.2 M1591.1 587.4 H1599.3 M1587.8 592.7 H1599.3 M1587.8 598 H1597.5"/><path d="M1594.7 609.3 L1595.5 603.5 L1605.5 593.5 a2.6 2.6 0 0 1 3.7 3.7 L1599.2 607.2 Z"/></g><rect x="1187.5" y="552.5" width="116" height="116" fill="none" stroke="#d43d24" stroke-width="5" stroke-linejoin="miter"/><rect x="9.5" y="1275.5" width="135" height="132" fill="none" stroke="#d43d24" stroke-width="5" stroke-linejoin="miter"/></svg>
<div class="t" style="left:1208.0px;top:630.8px;font-size:20.35px;letter-spacing:0px;color:#fff;font-weight:400;-webkit-text-stroke:0.4px #fff;transform:scaleX(1.0185);transform-origin:0 0;">Deposit</div>
<div style="position:absolute;left:1100px;top:1155px;width:304px;height:72px;background:#b38b6a;border-radius:12px;"></div>
<svg style="position:absolute;left:0;top:0" width="2772" height="1426"><circle cx="1140" cy="1192" r="16" fill="#fff"/><path d="M1131 1192 H1149 M1140 1183 V1201" stroke="#b38b6a" stroke-width="2.6" stroke-linecap="round"/></svg>
<div class="t" style="left:1167.8px;top:1175.1px;font-size:29.65px;letter-spacing:0px;color:#fff;font-weight:700;transform:scaleX(0.8899);transform-origin:0 0;">Add Live account</div>
<div style="position:absolute;left:1052px;top:1212px;width:1288px;height:34px;background:linear-gradient(rgba(26,26,26,0),rgba(26,26,26,1));border-radius:0px;border-radius:0 0 14px 0"></div>
</body></html>
